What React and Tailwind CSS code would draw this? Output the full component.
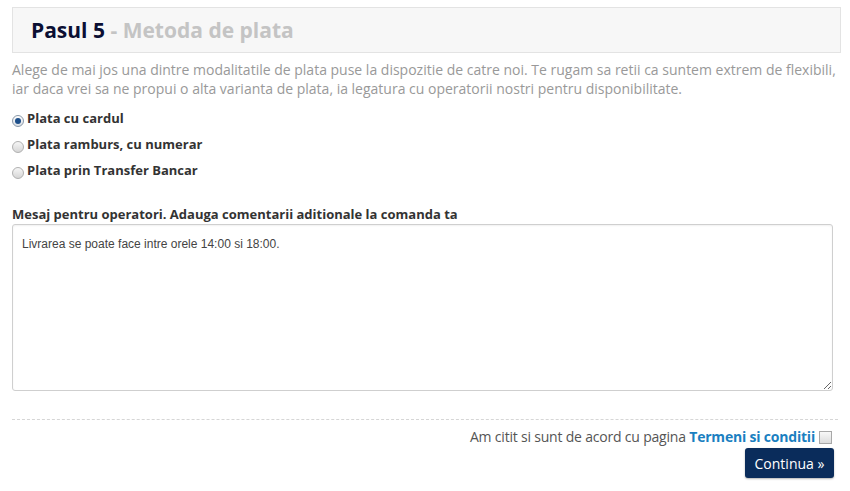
export default function App() {
  const options = ['Plata cu cardul', 'Plata ramburs, cu numerar', 'Plata prin Transfer Bancar'];

  return (
    <div className="w-[850px] h-[491px] bg-white px-3 pt-[7px] font-['Open_Sans',sans-serif] text-[14px]">
      <div className="flex h-[46px] w-[829px] items-center border border-[#e3e3e3] bg-[#f7f7f7] pl-[18px]">
        <h2 className="text-[21px] font-bold leading-none text-[#0b0f33]">
          Pasul 5 <span className="text-[#c4c4c4]">- Metoda de plata</span>
        </h2>
      </div>

      <p className="mt-[7px] leading-[19px] text-[#999]">
        Alege de mai jos una dintre modalitatile de plata puse la dispozitie de catre noi. Te rugam sa retii ca suntem extrem de flexibili, iar daca vrei sa ne propui o alta varianta de plata, ia legatura cu operatorii nostri pentru disponibilitate.
      </p>

      <div className="mt-[11px] flex flex-col gap-[7px]">
        {options.map((o, i) => (
          <label key={o} className="flex h-[19px] items-center text-[13px] font-bold text-[#333]">
            <span
              className={
                i === 0
                  ? 'mr-[3px] mt-[5px] flex h-[12px] w-[12px] items-center justify-center rounded-full border border-[#8a98a8] bg-gradient-to-b from-[#ffffff] to-[#d8dde3]'
                  : 'mr-[3px] mt-[5px] h-[12px] w-[12px] rounded-full border border-[#b0b0b0] bg-gradient-to-b from-[#f6f6f6] to-[#d6d6d6]'
              }
            >
              {i === 0 && <span className="h-[6px] w-[6px] rounded-full bg-[#1d4f8a]" />}
            </span>
            {o}
          </label>
        ))}
      </div>

      <div className="mt-[25px] text-[13px] font-bold leading-[19px] text-[#333]">
        Mesaj pentru operatori. Adauga comentarii aditionale la comanda ta
      </div>
      <textarea
        className="mt-0 block h-[167px] w-[821px] rounded-[3px] border border-[#cfcfcf] px-[9px] py-[10px] font-['Liberation_Sans',Arial,sans-serif] text-[12px] text-[#444] shadow-[inset_0_1px_2px_rgba(0,0,0,0.06)] outline-none"
        defaultValue="Livrarea se poate face intre orele 14:00 si 18:00."
      />

      <div className="mt-[28px] border-t border-dashed border-[#d6d6d6]" />

      <div className="mt-[6px] flex items-center justify-end pr-[6px] tracking-[-0.2px] text-[#555]">
        <span>
          Am citit si sunt de acord cu pagina{' '}
          <a href="#" className="font-bold text-[#1a7fc1]">Termeni si conditii</a>
        </span>
        <span className="ml-[4px] mt-[2px] h-[13px] w-[13px] border border-[#a8a8a8] bg-gradient-to-b from-[#f8f8f8] to-[#dcdcdc]" />
      </div>

      <div className="mt-[1px] flex justify-end pr-[4px]">
        <button className="h-[30px] w-[89px] rounded-[3px] bg-[#0a2c5b] text-[14px] text-white shadow-[0_1px_2px_rgba(0,0,0,0.3)]">
          Continua »
        </button>
      </div>
    </div>
  );
}
